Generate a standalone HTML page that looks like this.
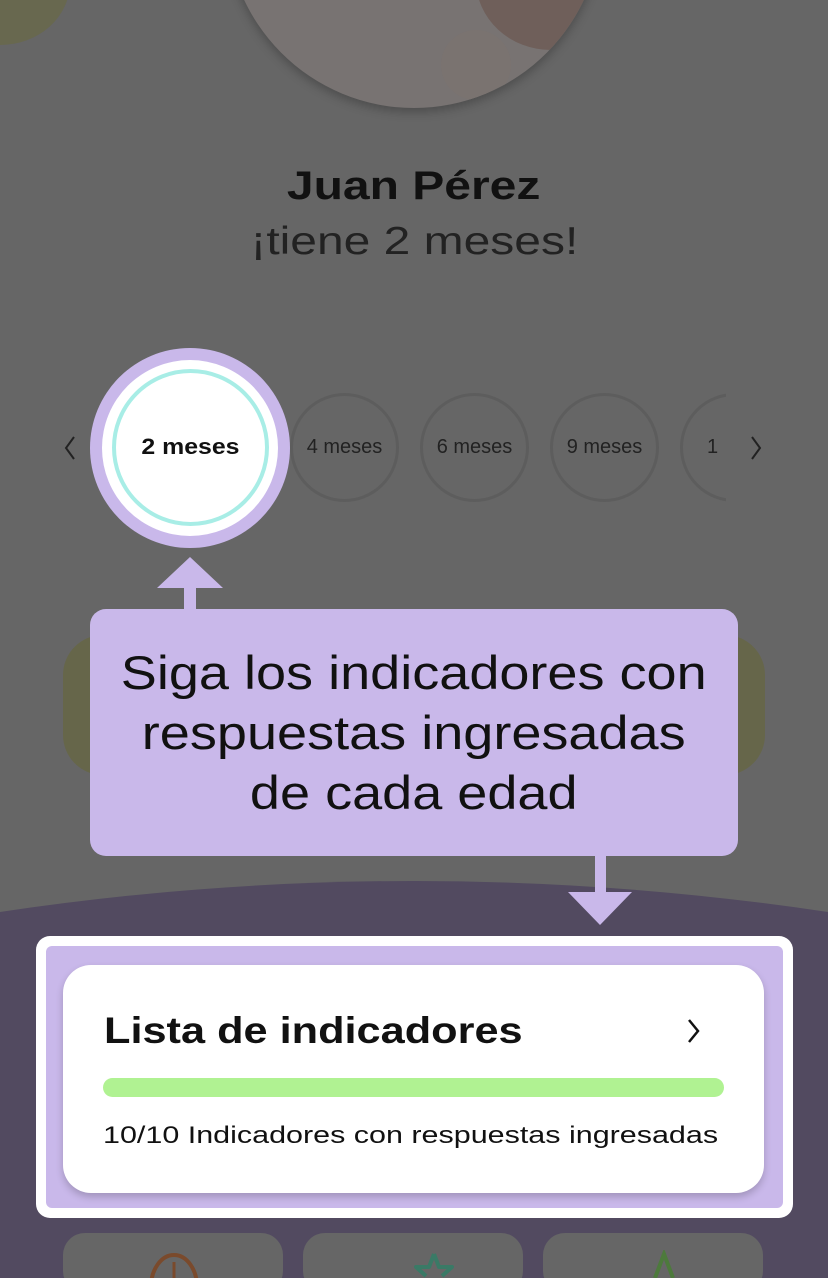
<!DOCTYPE html>
<html><head><meta charset="utf-8"><style>
*{margin:0;padding:0;box-sizing:border-box}
html,body{width:828px;height:1278px;overflow:hidden}
body{background:#666;font-family:"Liberation Sans",sans-serif;position:relative;color:#111}
.a{position:absolute}
.c{border-radius:50%}
.t{position:absolute;left:0;width:828px;text-align:center}
.s{display:inline-block}
</style></head><body>
<div class="a c" style="left:-70px;top:-80px;width:140px;height:125px;background:#68684f"></div>
<div class="a c" style="left:226px;top:-270px;width:376px;height:378px;overflow:hidden;background:#787372;box-shadow:0 4px 10px rgba(0,0,0,.25)">
 <div class="a c" style="left:250px;top:180px;width:150px;height:140px;background:#6f5f5a"></div>
 <div class="a c" style="left:215px;top:300px;width:70px;height:70px;background:#7a7370"></div>
</div>
<div class="t" style="top:164px;font-size:40px;font-weight:bold;color:#111"><span class="s" style="transform:scaleX(1.2)">Juan Pérez</span></div>
<div class="t" style="top:220px;font-size:39px;color:#222"><span class="s" style="transform:scaleX(1.23)">¡tiene 2 meses!</span></div>

<svg class="a" style="left:58px;top:434px" width="720" height="28"><path d="M16 3 L8 14 L16 25" stroke="#222" stroke-width="2" fill="none"/><path d="M694 3 L702 14 L694 25" stroke="#222" stroke-width="2" fill="none"/></svg>
<div class="a c" style="left:290px;top:393px;width:109px;height:109px;border:3px solid #5d5d5d"></div>
<div class="a c" style="left:420px;top:393px;width:109px;height:109px;border:3px solid #5d5d5d"></div>
<div class="a c" style="left:550px;top:393px;width:109px;height:109px;border:3px solid #5d5d5d"></div>
<div class="a" style="left:680px;top:393px;width:46px;height:109px;overflow:hidden"><div class="c" style="width:109px;height:109px;border:3px solid #5d5d5d"></div></div>
<div class="a" style="left:290px;top:436px;width:109px;text-align:center;font-size:20px;color:#222">4 meses</div>
<div class="a" style="left:420px;top:436px;width:109px;text-align:center;font-size:20px;color:#222">6 meses</div>
<div class="a" style="left:550px;top:436px;width:109px;text-align:center;font-size:20px;color:#222">9 meses</div>
<div class="a" style="left:707px;top:436px;font-size:20px;color:#222">1</div>
<div class="a c" style="left:90px;top:348px;width:200px;height:200px;background:#c9b8ea"></div>
<div class="a c" style="left:102px;top:360px;width:176px;height:176px;background:#fff"></div>
<div class="a c" style="left:112px;top:369px;width:157px;height:157px;border:4px solid #a8ede6"></div>
<div class="a" style="left:90px;top:434px;width:200px;text-align:center;font-size:22px;font-weight:bold;color:#111"><span class="s" style="transform:scaleX(1.13)">2 meses</span></div>

<svg class="a" style="left:0;top:0" width="828" height="640">
<path d="M190 557 L223 588 L196 588 L196 612 L184 612 L184 588 L157 588 Z" fill="#c9b8ea"/>
</svg>
<div class="a" style="left:63px;top:635px;width:702px;height:140px;background:#66664a;border-radius:40px"></div>
<div class="a" style="left:90px;top:609px;width:648px;height:247px;background:#c9b8ea;border-radius:16px"></div>
<div class="a" style="left:90px;top:643px;width:648px;text-align:center;font-size:47px;line-height:60px;color:#111"><span class="s" style="transform:scaleX(1.15)">Siga los indicadores con<br>respuestas ingresadas<br>de cada edad</span></div>

<svg class="a" style="left:0;top:850px" width="828" height="428">
<path d="M0 62 Q414 0 828 62 L828 428 L0 428 Z" fill="#524a60"/>
<path d="M595 6 L606 6 L606 42 L632 42 L600 75 L568 42 L595 42 Z" fill="#c9b8ea"/>
</svg>
<div class="a" style="left:36px;top:936px;width:757px;height:282px;background:#fff;border-radius:14px"></div>
<div class="a" style="left:46px;top:946px;width:737px;height:262px;background:#c9b8ea;border-radius:6px"></div>
<div class="a" style="left:63px;top:965px;width:701px;height:228px;background:#fff;border-radius:28px;box-shadow:0 4px 8px rgba(0,0,0,.2)"></div>
<div class="a" style="left:104px;top:1010px;font-size:37px;font-weight:bold;color:#111;transform:scaleX(1.17);transform-origin:0 0">Lista de indicadores</div>
<svg class="a" style="left:686px;top:1018px" width="16" height="26"><path d="M3 2 L12 13 L3 24" stroke="#111" stroke-width="2.5" fill="none"/></svg>
<div class="a" style="left:103px;top:1078px;width:621px;height:19px;background:#b0f292;border-radius:10px"></div>
<div class="a" style="left:103px;top:1122px;font-size:24px;color:#111;transform:scaleX(1.27);transform-origin:0 0">10/10 Indicadores con respuestas ingresadas</div>

<div class="a" style="left:63px;top:1233px;width:220px;height:60px;background:#666;border-radius:22px"></div>
<div class="a" style="left:303px;top:1233px;width:220px;height:60px;background:#666;border-radius:22px"></div>
<div class="a" style="left:543px;top:1233px;width:220px;height:60px;background:#666;border-radius:22px"></div>
<svg class="a" style="left:0;top:1250px" width="828" height="28">
<ellipse cx="174" cy="37" rx="23" ry="32" stroke="#7a4a2c" stroke-width="4" fill="none"/><path d="M174 12 V28" stroke="#7a4a2c" stroke-width="3"/>
<path d="M434 4 L439 17 L452 17 L442 26 M434 4 L429 17 L416 17 L426 26" stroke="#3a7a66" stroke-width="4" fill="none" stroke-linejoin="round"/>
<path d="M655 28 L664 4 L673 28" stroke="#4d7a3c" stroke-width="4" fill="none"/>
</svg>
</body></html>
